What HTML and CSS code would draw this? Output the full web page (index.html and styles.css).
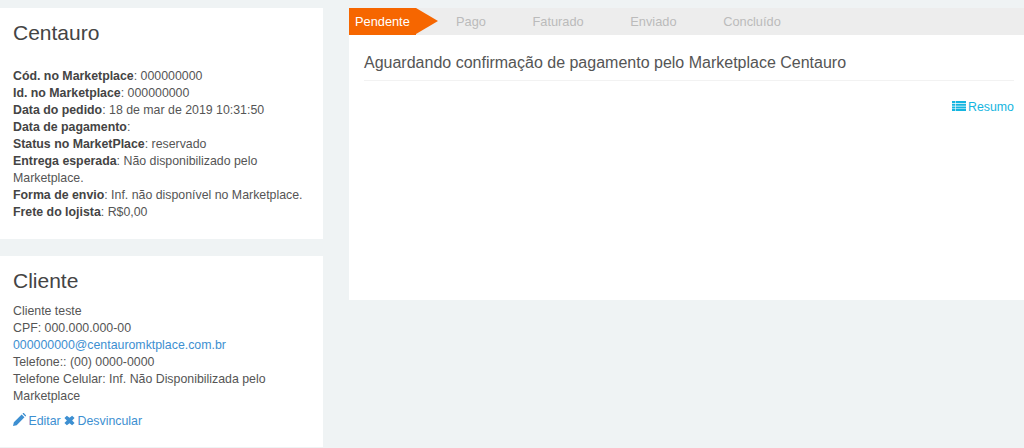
FILE: index.html
```html
<!DOCTYPE html>
<html lang="en">
<head>
    <meta charset="UTF-8">
    <title>Pedido</title>
    <link rel="stylesheet" href="styles.css">
</head>
<body>
    <div class="page">
        <div class="side">
            <div class="box box-order">
                <h3>Centauro</h3>
                <div class="info">
                    <div><b>Cód. no Marketplace</b>: 000000000</div>
                    <div><b>Id. no Marketplace</b>: 000000000</div>
                    <div><b>Data do pedido</b>: 18 de mar de 2019 10:31:50</div>
                    <div><b>Data de pagamento</b>:</div>
                    <div><b>Status no MarketPlace</b>: reservado</div>
                    <div><b>Entrega esperada</b>: Não disponibilizado pelo Marketplace.</div>
                    <div><b>Forma de envio</b>: Inf. não disponível no Marketplace.</div>
                    <div><b>Frete do lojista</b>: R$0,00</div>
                </div>
            </div>
            <div class="box box-client">
                <h3>Cliente</h3>
                <div class="info">
                    <div>Cliente teste</div>
                    <div>CPF: 000.000.000-00</div>
                    <div><a href="#">000000000@centauromktplace.com.br</a></div>
                    <div>Telefone:: (00) 0000-0000</div>
                    <div>Telefone Celular: Inf. Não Disponibilizada pelo Marketplace</div>
                </div>
                <div class="actions">
                    <a href="#"><svg class="icon" viewBox="0 0 12 12"><path d="M0 12l.8-3.4L8 1.4l2.6 2.6-7.2 7.2zM8.8.6l.5-.5c.2-.2.5-.2.7 0l1.9 1.9c.2.2.2.5 0 .7l-.5.5z"/></svg> Editar</a>
                    <a href="#"><svg class="icon icon-x" viewBox="0 0 10 10"><path d="M2.6.6L5 2.6 7.4.6 9.6 2.8 7.4 5l2.2 2.2-2.2 2.2L5 7.4 2.6 9.4.4 7.2 2.6 5 .4 2.8z"/></svg> Desvincular</a>
                </div>
            </div>
        </div>
        <div class="main">
            <ul class="steps">
                <li class="active">Pendente</li>
                <li>Pago</li>
                <li>Faturado</li>
                <li>Enviado</li>
                <li>Concluído</li>
            </ul>
            <div class="main-body">
                <h4>Aguardando confirmação de pagamento pelo Marketplace Centauro</h4>
                <div class="links">
                    <a href="#"><svg class="icon icon-list" viewBox="0 0 14 10"><path d="M0 0h3v2H0zM3.6 0H14v2H3.6zM0 2.7h3v2H0zM3.6 2.7H14v2H3.6zM0 5.4h3v2H0zM3.6 5.4H14v2H3.6zM0 8h3v2H0zM3.6 8H14v2H3.6z"/></svg> Resumo</a>
                </div>
            </div>
        </div>
    </div>
</body>
</html>
```

FILE: styles.css
```css
html, body {
    margin: 0;
    padding: 0;
    height: 448px;
    overflow: hidden;
}
body {
    background: #eff3f4;
    font-family: "Liberation Sans", Arial, sans-serif;
    font-size: 12.35px;
    line-height: 17px;
    color: #555;
}
a {
    color: #3d8fd1;
    text-decoration: none;
}
.page {
    display: flex;
    align-items: flex-start;
    gap: 26px;
    padding-top: 8px;
}
.side {
    width: 323px;
    flex-shrink: 0;
}
.box {
    background: #fff;
    padding: 13px 13px 0;
    box-sizing: border-box;
}
.box-order {
    height: 231px;
    margin-bottom: 17px;
}
.box-client {
    height: 191px;
}
.box h3 {
    margin: 0;
    font-size: 21px;
    line-height: 24px;
    font-weight: 400;
    color: #444;
}
.box-order .info {
    margin-top: 23px;
}
.box-client h3 {
    margin-bottom: 10px;
}
.info b {
    color: #444;
}
.actions {
    margin-top: 8px;
}
.icon {
    width: 13px;
    height: 13px;
    margin-right: -1px;
    fill: currentColor;
    vertical-align: -1px;
}
.icon-x {
    width: 11px;
    height: 11px;
    vertical-align: -1px;
}
.main {
    flex: 1;
    height: 292px;
    background: #fff;
}
.steps {
    display: flex;
    margin: 0;
    padding: 0;
    list-style: none;
    height: 27px;
    background: #ededed;
    font-size: 12.8px;
    line-height: 27px;
    color: #bbb;
}
.steps li {
    padding-right: 46.6px;
}
.steps .active {
    position: relative;
    width: 67px;
    padding: 0 0 0 6px;
    margin-right: 40px;
    background: #f66600;
    color: #fff;
    box-sizing: border-box;
}
.steps .active::after {
    content: "";
    position: absolute;
    left: 67px;
    top: 0;
    border-style: solid;
    border-width: 13.5px 0 13.5px 22px;
    border-color: transparent transparent transparent #f66600;
}
.main-body {
    padding: 0 10px 0 15px;
}
.main-body h4 {
    margin: 0;
    padding: 18px 0 7px;
    font-size: 16px;
    line-height: 20px;
    font-weight: 400;
    color: #555;
    border-bottom: 1px solid #f2f2f2;
}
.links {
    margin-top: 18px;
    text-align: right;
}
.links a {
    color: #14b5e0;
}
.icon-list {
    width: 14px;
    height: 10px;
    vertical-align: 0;
}
```
